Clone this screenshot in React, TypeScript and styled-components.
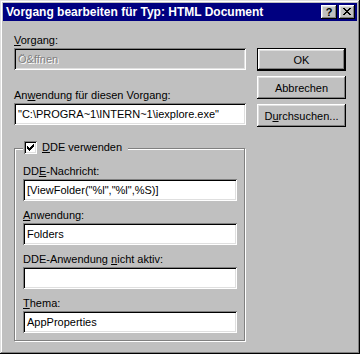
import styled, { createGlobalStyle } from "styled-components";

const colors = {
  face: "#c0c0c0",
  light: "#dfdfdf",
  shadow: "#808080",
  dark: "#000000",
  white: "#ffffff",
  title: "#000080",
};

const GlobalStyle = createGlobalStyle`
  html, body {
    margin: 0;
    padding: 0;
    background: ${colors.face};
  }

  body {
    font-family: "Liberation Sans", Arial, sans-serif;
    font-size: 11px;
    color: #000;
  }
`;

const raised = `
  box-shadow: inset -1px -1px ${colors.dark}, inset 1px 1px ${colors.white},
    inset -2px -2px ${colors.shadow}, inset 2px 2px ${colors.light};
`;

const sunken = `
  box-shadow: inset 1px 1px ${colors.shadow}, inset -1px -1px ${colors.white},
    inset 2px 2px ${colors.dark}, inset -2px -2px ${colors.light};
`;

const CloseGlyph = () => (
  <svg width="8" height="7" viewBox="0 0 8 7" shapeRendering="crispEdges">
    <path
      fill="#000"
      d="M0 0h2v1H0zM6 0h2v1H6zM1 1h2v1H1zM5 1h2v1H5zM2 2h4v1H2zM3 3h2v1H3zM2 4h4v1H2zM1 5h2v1H1zM5 5h2v1H5zM0 6h2v1H0zM6 6h2v1H6z"
    />
  </svg>
);

const CheckGlyph = () => (
  <svg width="13" height="13" viewBox="0 0 13 13" shapeRendering="crispEdges">
    <path
      fill="#000"
      d="M9 3h1v1H9zM8 4h2v1H8zM3 5h1v1H3zM7 5h3v1H7zM3 6h2v1H3zM6 6h3v1H6zM3 7h5v1H3zM4 8h3v1H4zM5 9h1v1H5z"
    />
  </svg>
);

const App: React.FC = () => {
  return (
    <>
      <GlobalStyle />
      <Window>
        <TitleBar>
          <TitleText>Vorgang bearbeiten für Typ: HTML Document</TitleText>
          <CaptionButtons>
            <CaptionButton>?</CaptionButton>
            <CaptionButton>
              <CloseGlyph />
            </CaptionButton>
          </CaptionButtons>
        </TitleBar>

        <Body>
          <LeftColumn>
            <FieldBlock>
              <Label>
                <u>V</u>organg:
              </Label>
              <Field $disabled>Ö&amp;ffnen</Field>
            </FieldBlock>

            <FieldBlock>
              <Label>
                An<u>w</u>endung für diesen Vorgang:
              </Label>
              <Field>"C:\PROGRA~1\INTERN~1\iexplore.exe"</Field>
            </FieldBlock>

            <GroupBox>
              <Legend>
                <CheckBox>
                  <CheckGlyph />
                </CheckBox>
                <span>
                  <u>D</u>DE verwenden
                </span>
              </Legend>

              <FieldBlock>
                <Label>
                  DD<u>E</u>-Nachricht:
                </Label>
                <Field>[ViewFolder("%l","%l",%S)]</Field>
              </FieldBlock>
              <FieldBlock>
                <Label>
                  <u>A</u>nwendung:
                </Label>
                <Field>Folders</Field>
              </FieldBlock>
              <FieldBlock>
                <Label>
                  DDE-Anwendung <u>n</u>icht aktiv:
                </Label>
                <Field />
              </FieldBlock>
              <FieldBlock>
                <Label>
                  <u>T</u>hema:
                </Label>
                <Field>AppProperties</Field>
              </FieldBlock>
            </GroupBox>
          </LeftColumn>

          <ButtonColumn>
            <PushButton $default>OK</PushButton>
            <PushButton>Abbrechen</PushButton>
            <PushButton>
              D<u>u</u>rchsuchen...
            </PushButton>
          </ButtonColumn>
        </Body>
      </Window>
    </>
  );
};

export default App;

const Window = styled.div`
  width: 360px;
  height: 354px;
  box-sizing: border-box;
  padding: 3px;
  background: ${colors.face};
  box-shadow: inset -1px -1px ${colors.dark}, inset 1px 1px ${colors.light},
    inset -2px -2px ${colors.shadow}, inset 2px 2px ${colors.white};
`;

const TitleBar = styled.div`
  height: 18px;
  display: flex;
  align-items: center;
  justify-content: space-between;
  padding: 0 2px 0 3px;
  background: ${colors.title};
`;

const TitleText = styled.span`
  color: ${colors.white};
  font-weight: bold;
  font-size: 12px;
  line-height: 18px;
  white-space: nowrap;
`;

const CaptionButtons = styled.div`
  display: flex;
  gap: 2px;
`;

const CaptionButton = styled.div`
  width: 16px;
  height: 14px;
  box-sizing: border-box;
  display: flex;
  align-items: center;
  justify-content: center;
  padding-bottom: 1px;
  background: ${colors.face};
  font-weight: bold;
  font-size: 11px;
  line-height: 12px;
  ${raised}
`;

const Body = styled.div`
  display: flex;
  padding: 13px 0 0 11px;
`;

const LeftColumn = styled.div`
  width: 232px;
  display: flex;
  flex-direction: column;
  gap: 19px;
`;

const FieldBlock = styled.div`
  display: flex;
  flex-direction: column;
  gap: 1px;
`;

const Label = styled.div`
  height: 13px;
  line-height: 13px;
  white-space: nowrap;
`;

const Field = styled.div<{ $disabled?: boolean }>`
  height: 22px;
  box-sizing: border-box;
  padding: 0 4px;
  line-height: 22px;
  white-space: nowrap;
  overflow: hidden;
  background: ${({ $disabled }) => ($disabled ? colors.face : colors.white)};
  color: ${({ $disabled }) => ($disabled ? colors.shadow : "#000")};
  text-shadow: ${({ $disabled }) =>
    $disabled ? `1px 1px 0 ${colors.white}` : "none"};
  ${sunken}
`;

const GroupBox = styled.div`
  position: relative;
  width: 231px;
  box-sizing: border-box;
  margin-top: 4px;
  padding: 16px 7px 7px 8px;
  display: flex;
  flex-direction: column;
  gap: 8px;
  border: 1px solid ${colors.shadow};
  box-shadow: 1px 1px 0 ${colors.white}, inset 1px 1px 0 ${colors.white};
`;

const Legend = styled.div`
  position: absolute;
  top: -8px;
  left: 8px;
  height: 13px;
  display: flex;
  align-items: center;
  gap: 5px;
  padding: 0 6px 0 1px;
  line-height: 13px;
  background: ${colors.face};
`;

const CheckBox = styled.div`
  width: 13px;
  height: 13px;
  display: flex;
  background: ${colors.white};
  ${sunken}
`;

const ButtonColumn = styled.div`
  display: flex;
  flex-direction: column;
  gap: 5px;
  margin-left: 11px;
  padding-top: 14px;
`;

const PushButton = styled.button<{ $default?: boolean }>`
  width: 89px;
  height: 23px;
  padding: 0;
  border: none;
  background: ${colors.face};
  font-family: "Liberation Sans", Arial, sans-serif;
  font-size: 11px;
  color: #000;
  ${({ $default }) =>
    $default
      ? `box-shadow: inset 0 0 0 1px ${colors.dark}, inset -2px -2px ${colors.dark},
          inset 2px 2px ${colors.white}, inset -3px -3px ${colors.shadow},
          inset 3px 3px ${colors.light};`
      : raised}
`;
